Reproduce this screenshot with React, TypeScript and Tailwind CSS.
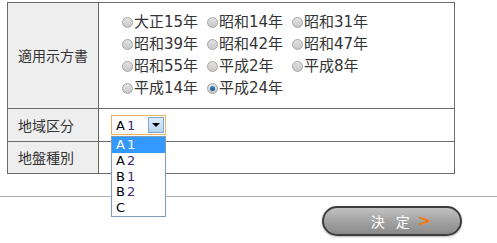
const years = [
  ['大正15年', '昭和14年', '昭和31年'],
  ['昭和39年', '昭和42年', '昭和47年'],
  ['昭和55年', '平成2年', '平成8年'],
  ['平成14年', '平成24年'],
];

function Radio({ checked }: { checked?: boolean }) {
  return (
    <span className="mr-[1px] inline-flex h-[11px] w-[11px] shrink-0 items-center justify-center rounded-full border border-[#a5a5a5] bg-gradient-to-b from-[#e2e2e2] to-[#c8c8c8]">
      {checked && <span className="h-[5px] w-[5px] rounded-full bg-gradient-to-b from-[#3a8fd0] to-[#0b4f8a]" />}
    </span>
  );
}

export default function App() {
  return (
    <div className="relative h-[243px] w-[497px] overflow-hidden bg-white font-['Noto_Sans_CJK_JP',sans-serif] text-[#333]">
      <div className="ml-[7px] mt-[2px] w-[448px] border border-[#6b6b6b]">
        {/* 適用示方書 */}
        <div className="grid grid-cols-[91px_1fr]">
          <div className="flex items-center border-r border-[#6b6b6b] bg-[#eeeeee] pl-[10px] text-[14px]">
            適用示方書
          </div>
          <div className="pb-[9px] pl-[23px] pt-[8px]">
            {years.map((row, i) => (
              <div key={i} className="flex h-[22px] items-center">
                {row.map((y) => (
                  <label
                    key={y}
                    className="flex w-[85px] items-center font-['DejaVu_Sans','Noto_Sans_CJK_JP',sans-serif] text-[15px] leading-none"
                  >
                    <Radio checked={y === '平成24年'} />
                    {y}
                  </label>
                ))}
              </div>
            ))}
          </div>
        </div>

        {/* 地域区分 */}
        <div className="grid h-[33px] grid-cols-[91px_1fr] border-t border-[#6b6b6b]">
          <div className="flex items-center border-r border-[#6b6b6b] bg-[#eeeeee] pl-[10px] text-[14px]">
            地域区分
          </div>
          <div className="flex items-center pl-[12px]">
            <div className="flex h-[20px] w-[55px] items-center border border-[#e5b566] bg-white">
              <span className="flex-1 pl-[4px] font-['DejaVu_Sans',sans-serif] text-[13px] leading-none tracking-[2px] text-black">
                A<span className="text-[#3a2a7a]">1</span>
              </span>
              <span className="mr-[1px] flex h-[16px] w-[16px] items-center justify-center border border-[#7aa7d0] bg-gradient-to-b from-[#dcecfc] to-[#b8d8f4]">
                <span className="h-0 w-0 border-x-[4px] border-t-[4px] border-x-transparent border-t-black" />
              </span>
            </div>
          </div>
        </div>

        {/* 地盤種別 */}
        <div className="grid h-[32px] grid-cols-[91px_1fr] border-t border-[#6b6b6b]">
          <div className="flex items-center border-r border-[#6b6b6b] bg-[#eeeeee] pl-[10px] text-[14px]">
            地盤種別
          </div>
          <div />
        </div>
      </div>

      <div className="mt-[22px] border-t border-[#aaaaaa]" />

      <div className="flex justify-end pr-[35px] pt-[9px]">
        <button className="flex h-[30px] w-[140px] items-center justify-center rounded-full border-2 border-[#3d3d3d] bg-gradient-to-b from-[#c2c2c2] via-[#a3a3a3] to-[#8a8a8a] pl-[18px] text-[14px] text-white shadow-[0_1px_2px_rgba(0,0,0,0.3)]">
          <span className="tracking-[4px]">決 定</span>
          <span className="ml-[4px] font-['DejaVu_Sans',sans-serif] text-[16px] font-bold text-[#f07a10]">&gt;</span>
        </button>
      </div>

      {/* open dropdown list */}
      <div className="absolute left-[111px] top-[136px] w-[55px] border border-[#7f9db9] bg-white font-['DejaVu_Sans',sans-serif] text-[13px] leading-[15.8px] tracking-[2px] text-black">
        {[
          ['A', '1'],
          ['A', '2'],
          ['B', '1'],
          ['B', '2'],
          ['C', ''],
        ].map(([a, b], i) => (
          <div key={i} className={`pl-[4px] ${i === 0 ? 'bg-[#3399ff] text-white' : ''}`}>
            {a}
            <span className={i === 0 ? '' : 'text-[#3a2a7a]'}>{b}</span>
          </div>
        ))}
      </div>
    </div>
  );
}
